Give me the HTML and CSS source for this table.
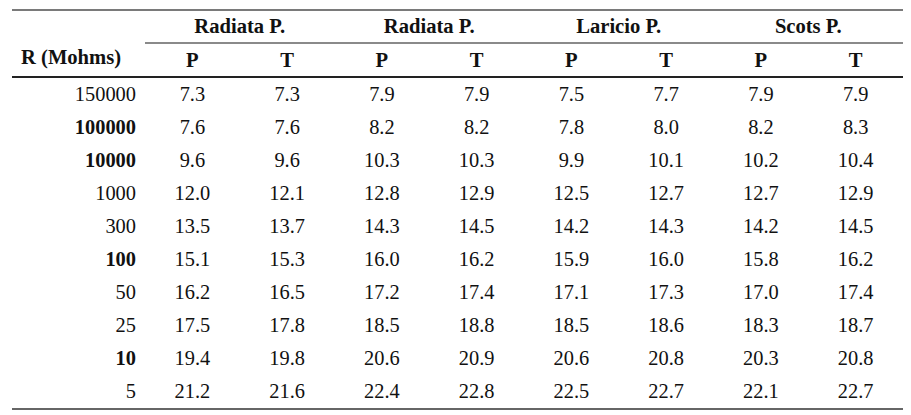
FILE: index.html
```html
<!DOCTYPE html>
<html>
<head>
<meta charset="utf-8">
<link rel="stylesheet" href="styles.css">
</head>
<body>
<table class="data">
  <thead>
    <tr class="groups">
      <th class="rlabel" rowspan="2">R (Mohms)</th>
      <th colspan="2" class="grp">Radiata P.</th>
      <th colspan="2" class="grp">Radiata P.</th>
      <th colspan="2" class="grp">Laricio P.</th>
      <th colspan="2" class="grp">Scots P.</th>
    </tr>
    <tr class="subs">
      <th>P</th><th>T</th><th>P</th><th>T</th><th>P</th><th>T</th><th>P</th><th>T</th>
    </tr>
  </thead>
  <tbody>
    <tr><td class="r">150000</td><td>7.3</td><td>7.3</td><td>7.9</td><td>7.9</td><td>7.5</td><td>7.7</td><td>7.9</td><td>7.9</td></tr>
    <tr><td class="r b">100000</td><td>7.6</td><td>7.6</td><td>8.2</td><td>8.2</td><td>7.8</td><td>8.0</td><td>8.2</td><td>8.3</td></tr>
    <tr><td class="r b">10000</td><td>9.6</td><td>9.6</td><td>10.3</td><td>10.3</td><td>9.9</td><td>10.1</td><td>10.2</td><td>10.4</td></tr>
    <tr><td class="r">1000</td><td>12.0</td><td>12.1</td><td>12.8</td><td>12.9</td><td>12.5</td><td>12.7</td><td>12.7</td><td>12.9</td></tr>
    <tr><td class="r">300</td><td>13.5</td><td>13.7</td><td>14.3</td><td>14.5</td><td>14.2</td><td>14.3</td><td>14.2</td><td>14.5</td></tr>
    <tr><td class="r b">100</td><td>15.1</td><td>15.3</td><td>16.0</td><td>16.2</td><td>15.9</td><td>16.0</td><td>15.8</td><td>16.2</td></tr>
    <tr><td class="r">50</td><td>16.2</td><td>16.5</td><td>17.2</td><td>17.4</td><td>17.1</td><td>17.3</td><td>17.0</td><td>17.4</td></tr>
    <tr><td class="r">25</td><td>17.5</td><td>17.8</td><td>18.5</td><td>18.8</td><td>18.5</td><td>18.6</td><td>18.3</td><td>18.7</td></tr>
    <tr><td class="r b">10</td><td>19.4</td><td>19.8</td><td>20.6</td><td>20.9</td><td>20.6</td><td>20.8</td><td>20.3</td><td>20.8</td></tr>
    <tr class="last"><td class="r">5</td><td>21.2</td><td>21.6</td><td>22.4</td><td>22.8</td><td>22.5</td><td>22.7</td><td>22.1</td><td>22.7</td></tr>
  </tbody>
</table>
</body>
</html>
```

FILE: styles.css
```css
html, body {
  margin: 0;
  padding: 0;
  background: #ffffff;
}

body {
  padding: 9px 0 0 12px;
  font-family: "Liberation Serif", "Times New Roman", serif;
  font-size: 20.4px;
  color: #111;
}

.data {
  width: 891px;
  border-collapse: separate;
  border-spacing: 0;
  border-top: 2px solid #7a7a7a;
  table-layout: fixed;
  font-size: 20.4px;
}

.data th,
.data td {
  padding: 0;
  text-align: center;
  vertical-align: middle;
  line-height: 1;
}

.data th {
  font-weight: bold;
  font-size: 20.6px;
}

.data .rlabel {
  width: 124px;
  text-align: left;
  padding-left: 9px;
  padding-bottom: 8px;
  border-bottom: 2px solid #222;
  vertical-align: bottom;
}

.groups .grp {
  height: 31px;
  border-bottom: 2px solid #8a8a8a;
}

.subs th {
  height: 32px;
  border-bottom: 2px solid #222;
}

.data td {
  height: 33px;
}

.data td.r {
  text-align: right;
  padding-right: 9px;
}

.data td.b {
  font-weight: bold;
}

.data tr.last td {
  border-bottom: 2px solid #666;
}
```
